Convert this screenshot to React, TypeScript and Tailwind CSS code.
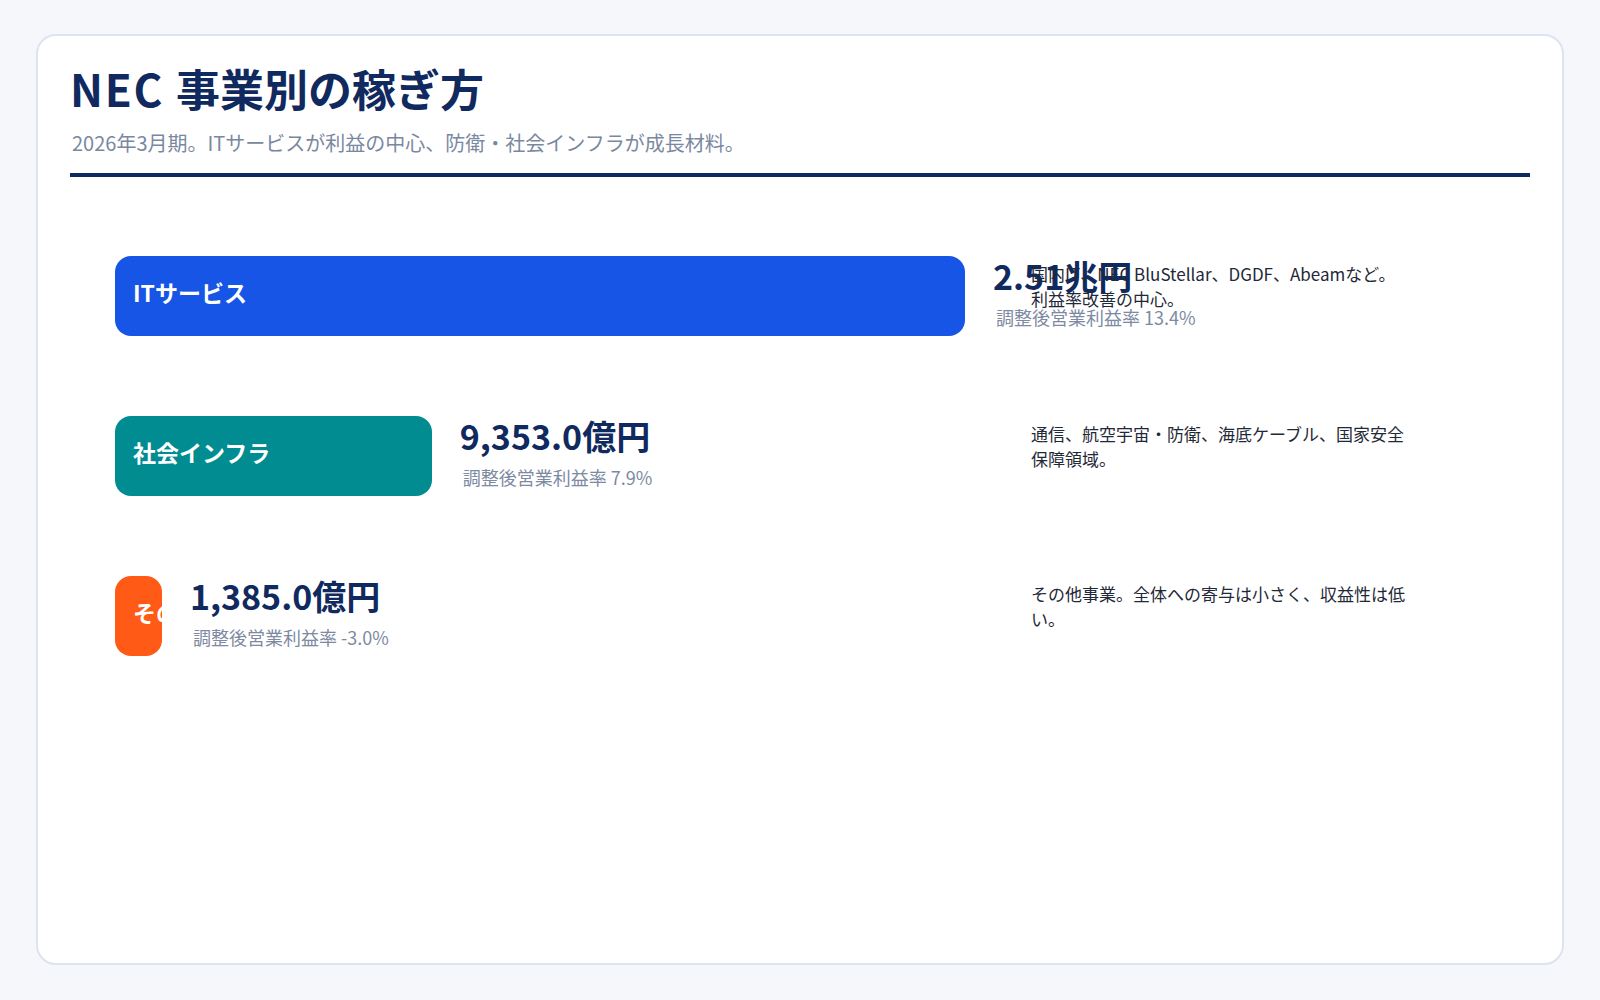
type Segment = {
  name: string;
  value: number; // 億円
  valueLabel: string;
  margin: string;
  color: string;
  note: string;
};

const segments: Segment[] = [
  {
    name: "ITサービス",
    value: 25100,
    valueLabel: "2.51兆円",
    margin: "13.4%",
    color: "bg-[#1655e6]",
    note: "国内IT、NEC BluStellar、DGDF、Abeamなど。利益率改善の中心。",
  },
  {
    name: "社会インフラ",
    value: 9353,
    valueLabel: "9,353.0億円",
    margin: "7.9%",
    color: "bg-[#008c91]",
    note: "通信、航空宇宙・防衛、海底ケーブル、国家安全保障領域。",
  },
  {
    name: "その他",
    value: 1385,
    valueLabel: "1,385.0億円",
    margin: "-3.0%",
    color: "bg-[#ff5a16]",
    note: "その他事業。全体への寄与は小さく、収益性は低い。",
  },
];

const TRACK = 850;
const maxValue = Math.max(...segments.map((s) => s.value));

function SegmentRow({ segment }: { segment: Segment }) {
  const width = (segment.value / maxValue) * TRACK;

  return (
    <div className="flex items-start">
      <div className="flex w-[916px] shrink-0 items-start gap-[28px]">
        <div
          className={`h-[80px] shrink-0 overflow-hidden whitespace-nowrap rounded-[16px] px-[18px] pt-[21px] text-[23px] font-bold leading-[30px] text-white ${segment.color}`}
          style={{ width }}
        >
          {segment.name}
        </div>
        <div className="min-w-0 whitespace-nowrap">
          <div className="text-[34px] font-bold leading-[39px] text-[#102a60]">{segment.valueLabel}</div>
          <div className="mt-[9px] pl-[3px] text-[18px] leading-[27px] text-[#7d8aa1]">
            調整後営業利益率 {segment.margin}
          </div>
        </div>
      </div>
      <p className="w-[380px] pt-[5px] text-[17px] leading-[25px] text-[#1f2937]">{segment.note}</p>
    </div>
  );
}

export default function App() {
  return (
    <div
      className="h-screen bg-[#f5f7fb] px-9 pt-[34px] pb-[35px]"
      style={{ fontFamily: '"Noto Sans CJK JP", "Noto Sans", sans-serif' }}
    >
      <div className="h-full rounded-[20px] border-2 border-[#dce4f1] bg-white px-8 pt-[28px]">
        <header className="border-b-4 border-[#10295e] pb-[15px]">
          <h1 className="text-[44px] font-bold leading-[48px] text-[#10295e]">
            <span className="tracking-[0.04em]">NEC </span>事業別の稼ぎ方
          </h1>
          <p className="mt-[16px] pl-[2px] text-[20px] leading-[30px] text-[#7a889f]">
            2026年3月期。ITサービスが利益の中心、防衛・社会インフラが成長材料。
          </p>
        </header>

        <div className="flex flex-col gap-[80px] pl-[45px] pt-[79px]">
          {segments.map((segment) => (
            <SegmentRow key={segment.name} segment={segment} />
          ))}
        </div>
      </div>
    </div>
  );
}
